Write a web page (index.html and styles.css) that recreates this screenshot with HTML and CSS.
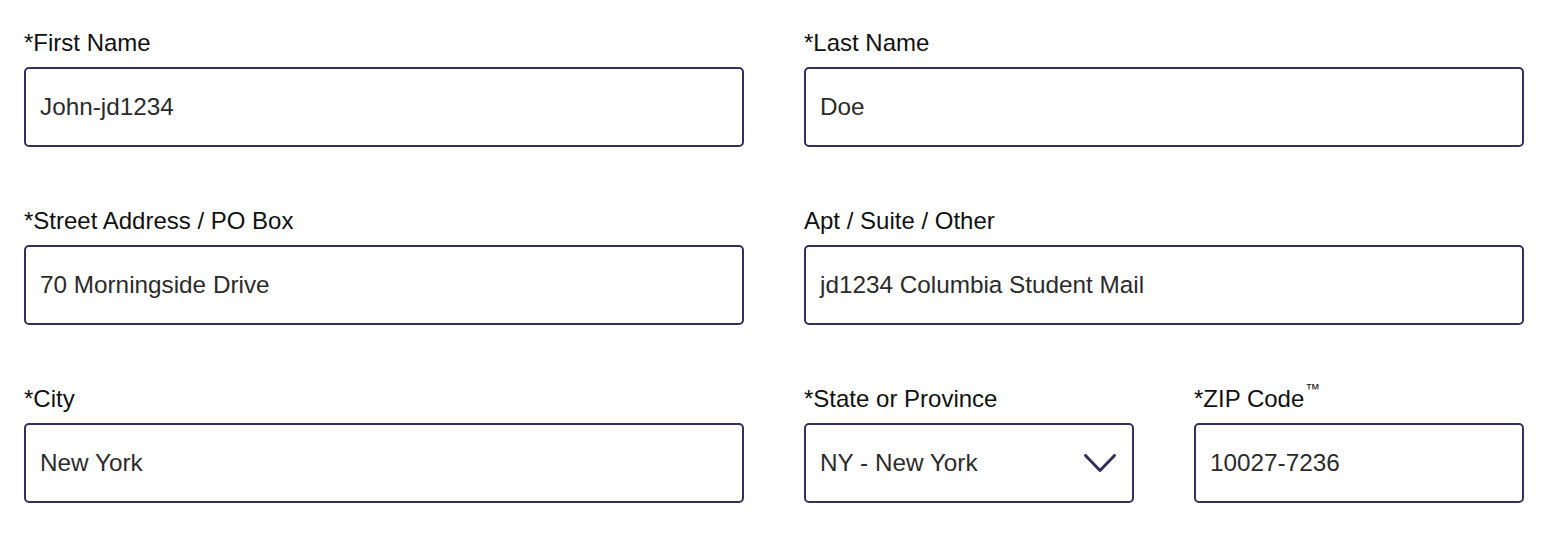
FILE: index.html
```html
<!DOCTYPE html>
<html lang="en">
<head>
<meta charset="utf-8">
<title>Address Form</title>
<link rel="stylesheet" href="styles.css">
</head>
<body>
<form class="form">
  <div class="field">
    <label class="label">*First Name</label>
    <div class="box">John-jd1234</div>
  </div>
  <div class="field">
    <label class="label">*Last Name</label>
    <div class="box">Doe</div>
  </div>
  <div class="field">
    <label class="label">*Street Address / PO Box</label>
    <div class="box">70 Morningside Drive</div>
  </div>
  <div class="field">
    <label class="label">Apt / Suite / Other</label>
    <div class="box">jd1234 Columbia Student Mail</div>
  </div>
  <div class="field">
    <label class="label">*City</label>
    <div class="box">New York</div>
  </div>
  <div class="split">
    <div class="field">
      <label class="label">*State or Province</label>
      <div class="box select">
        <span>NY - New York</span>
        <svg class="chev" width="32" height="19" viewBox="0 0 32 19"><path d="M1.5 1.5 L16 16.5 L30.5 1.5" fill="none" stroke="#34305c" stroke-width="3" stroke-linecap="round" stroke-linejoin="round"/></svg>
      </div>
    </div>
    <div class="field">
      <label class="label">*ZIP Code<sup class="tm">™</sup></label>
      <div class="box">10027-7236</div>
    </div>
  </div>
</form>
</body>
</html>
```

FILE: styles.css
```css
html, body {
  margin: 0;
  padding: 0;
  background: #ffffff;
}
body {
  font-family: "Liberation Sans", Arial, Helvetica, sans-serif;
}
.form {
  display: grid;
  grid-template-columns: 720px 720px;
  column-gap: 60px;
  row-gap: 60px;
  padding: 29px 0 0 24px;
}
.field {
  display: flex;
  flex-direction: column;
}
.label {
  font-size: 24px;
  line-height: 28px;
  height: 28px;
  color: #111111;
  margin-bottom: 10px;
  white-space: nowrap;
}
.tm {
  font-size: 15px;
  line-height: 0;
  position: relative;
  top: -4px;
  margin-left: 1px;
}
.box {
  box-sizing: border-box;
  height: 80px;
  border: 2px solid #34305c;
  border-radius: 5px;
  padding: 0 14px;
  display: flex;
  align-items: center;
  font-size: 24.3px;
  color: #2b2b2b;
}
.split {
  display: grid;
  grid-template-columns: 330px 330px;
  column-gap: 60px;
}
.select {
  justify-content: space-between;
  padding-right: 16px;
}
.chev {
  display: block;
}
```
